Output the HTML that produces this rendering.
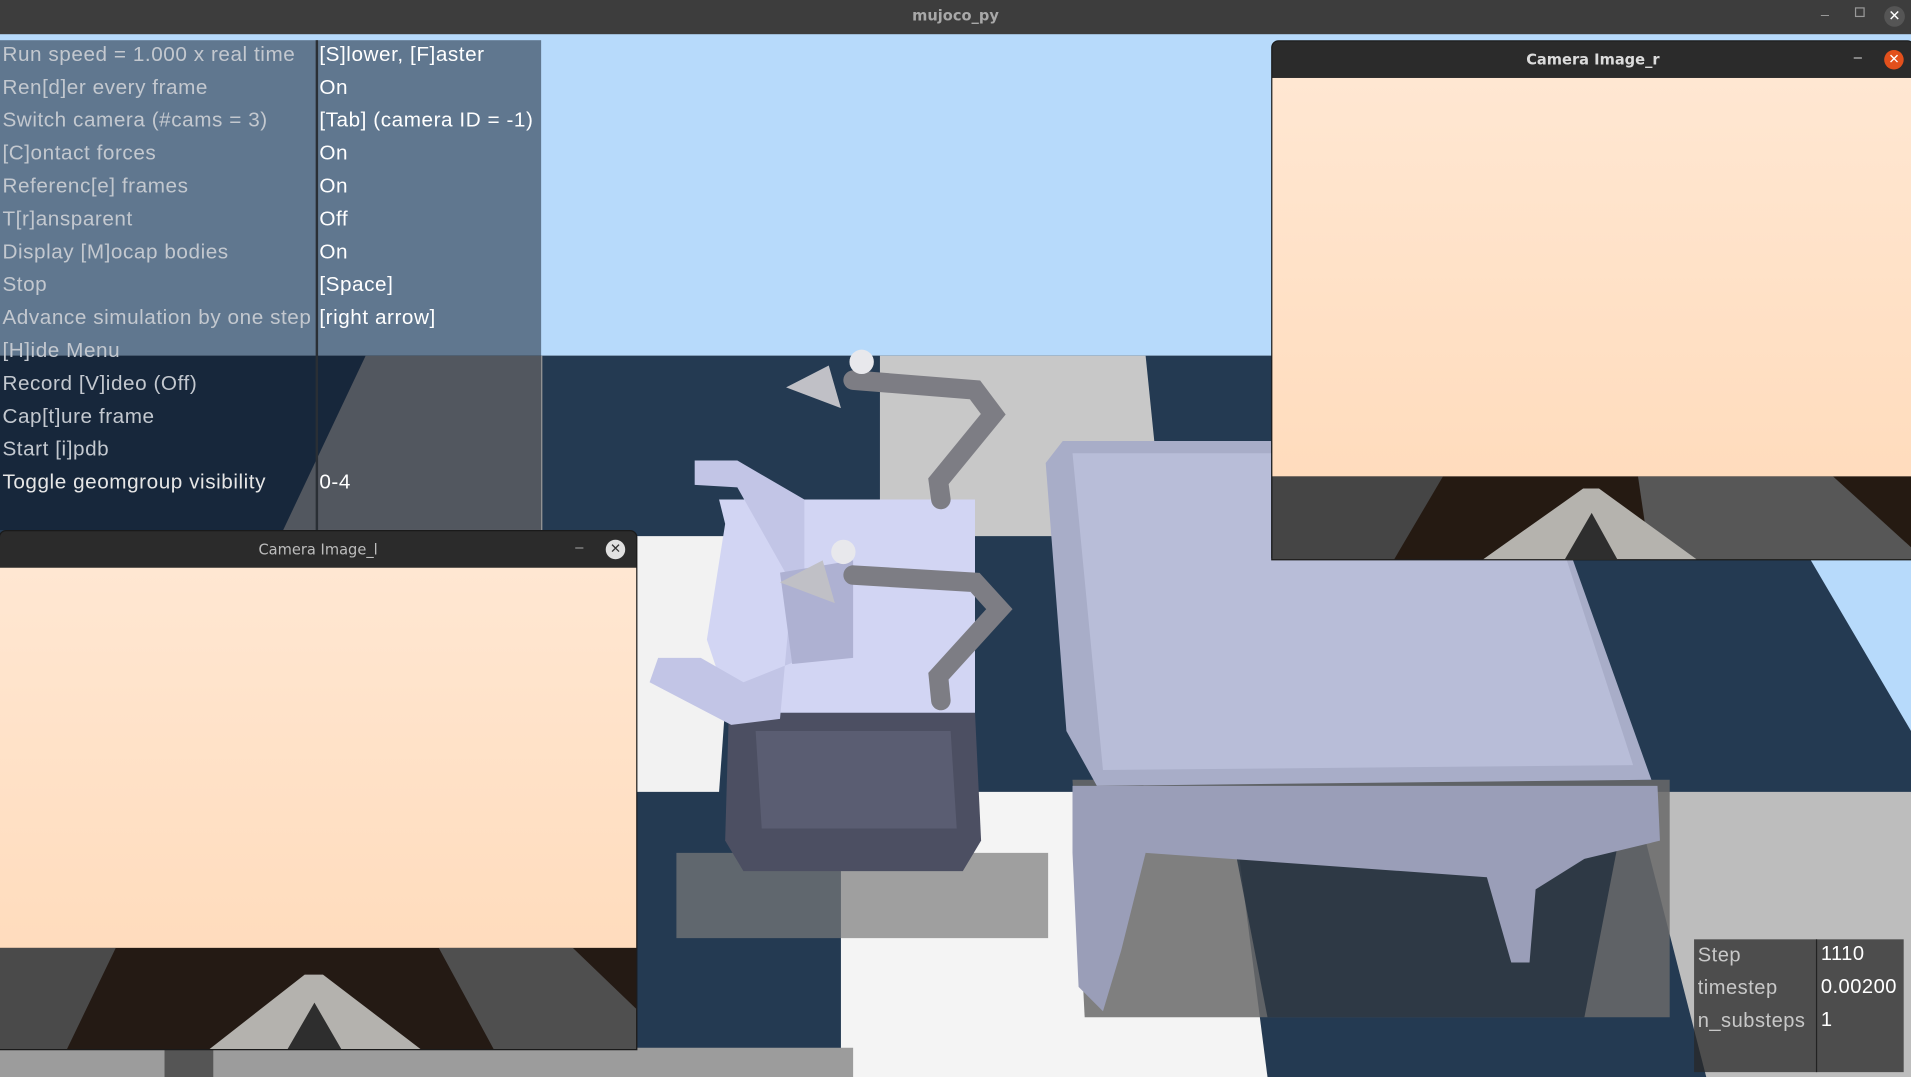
<!DOCTYPE html>
<html><head><meta charset="utf-8"><style>
html,body{margin:0;padding:0;width:1911px;height:1077px;overflow:hidden;background:#3c3c3c}
#s{position:absolute;left:0;top:0;width:1568px;height:884px;transform-origin:0 0;transform:scale(1.21875,1.21833);font-family:"Liberation Sans",sans-serif}
.abs{position:absolute}
.menu{left:0;top:33px;width:444px;height:402px;background:rgba(10,20,35,0.5)}
.row{position:absolute;left:2px;font-size:17px;letter-spacing:0.45px;color:#c3c8cf;line-height:20px;white-space:nowrap}
.val{position:absolute;left:262px;font-size:17px;letter-spacing:0.45px;color:#fff;line-height:20px;white-space:nowrap}
.win{background:#2b2b2b;border:1px solid #1a1a1a}
.wt{position:absolute;left:0;right:0;top:0;height:30px;line-height:30px;text-align:center;color:#dcdcdc;font-size:12px;font-weight:bold;font-family:"DejaVu Sans",sans-serif}
.peach{background:linear-gradient(#ffe7d2,#ffdcbd)}
</style></head><body><div id="s">
<svg class="abs" style="left:0;top:0" width="1568" height="884" viewBox="0 0 1568 884">
<rect x="0" y="28" width="1568" height="264" fill="#b7dafb"/>
<rect x="0" y="292" width="1568" height="592" fill="#243a52"/>
<polygon points="300,292 445,292 445,440 230,440" fill="#9a9a9a"/>
<polygon points="722,292 940,292 955,440 722,440" fill="#c8c8c8"/>
<polygon points="500,440 605,440 590,650 521,650" fill="#f2f2f2"/>
<polygon points="1480,450 1568,450 1568,600" fill="#b7dafb"/>
<polygon points="690,650 1010,650 1040,884 690,884" fill="#f4f4f4"/>
<polygon points="1340,650 1568,650 1568,884 1400,884" fill="#bdbdbd"/>
<polygon points="0,860 700,860 700,884 0,884" fill="#9c9c9c"/>
<polygon points="135,860 175,860 175,884 135,884" fill="#555"/>
<polygon points="880,640 1370,640 1370,835 890,835" fill="#6a6a6a" opacity="0.85"/>
<polygon points="1010,680 1330,680 1300,835 1040,835" fill="#1a2838" opacity="0.7"/>
<polygon points="555,700 860,700 860,770 555,770" fill="#7a7a7a" opacity="0.7"/>
<polygon points="598,585 800,585 805,690 790,715 610,715 595,690" fill="#4c4f62"/>
<polygon points="620,600 780,600 785,680 625,680" fill="#5a5d72"/>
<polygon points="590,410 800,410 800,585 600,585 580,525 595,430" fill="#d2d5f3"/>
<polygon points="570,378 605,378 660,410 660,540 610,560 575,540 540,540 533,560 600,595 640,590 650,480 605,400 570,398" fill="#c2c5e6"/>
<polygon points="640,470 700,460 700,540 650,545" fill="#aeb1d2"/>
<g fill="none" stroke="#7d7d84" stroke-width="16" stroke-linecap="round">
<path d="M700 312 L800 320 L815 340 L770 395 L772 410"/>
<path d="M700 472 L800 478 L820 500 L770 555 L772 575"/>
</g>
<g fill="#c0c0c6"><polygon points="645,318 680,300 690,335"/><polygon points="640,478 675,460 685,495"/>
<circle cx="707" cy="297" r="10" fill="#e8e8ec"/><circle cx="692" cy="453" r="10" fill="#e8e8ec"/></g>
<polygon points="872,362 1043,362 1043,458 1290,458 1355,640 900,645 875,600 858,380" fill="#a8adc8"/>
<polygon points="880,372 1043,372 1043,458 1285,458 1340,628 905,632" fill="#b8bdd8"/>
<polygon points="880,645 1360,645 1362,690 1300,705 1260,730 1255,790 1240,790 1220,720 940,700 920,780 905,830 885,810 880,700" fill="#9a9eb8"/>
</svg>
<div class="abs" style="left:0;top:0;width:1568px;height:28px;background:#3d3d3d"></div>
<div class="abs" style="left:0;top:0;width:1568px;height:28px;line-height:27px;text-align:center;color:#a8a8a8;font-size:12px;font-weight:bold;font-family:'DejaVu Sans',sans-serif">mujoco_py</div>
<div class="abs" style="left:1494px;top:5px;color:#999;font-size:12px">–</div>
<div class="abs" style="left:1522px;top:6px;width:6px;height:6px;border:1px solid #999"></div>
<div class="abs" style="left:1546px;top:5px;width:17px;height:17px;border-radius:50%;background:#555;color:#fff;font-size:12px;line-height:17px;text-align:center">✕</div>

<div class="abs menu"></div>
<div class="abs" style="left:259px;top:33px;width:2px;height:402px;background:#2a2f35"></div>
<div class="abs" style="left:0;top:34px">
<div class="row" style="top:1px">Run speed = 1.000 x real time</div><div class="val" style="top:1px">[S]lower, [F]aster</div>
<div class="row" style="top:28px">Ren[d]er every frame</div><div class="val" style="top:28px">On</div>
<div class="row" style="top:55px">Switch camera (#cams = 3)</div><div class="val" style="top:55px">[Tab] (camera ID = -1)</div>
<div class="row" style="top:82px">[C]ontact forces</div><div class="val" style="top:82px">On</div>
<div class="row" style="top:109px">Referenc[e] frames</div><div class="val" style="top:109px">On</div>
<div class="row" style="top:136px">T[r]ansparent</div><div class="val" style="top:136px">Off</div>
<div class="row" style="top:163px">Display [M]ocap bodies</div><div class="val" style="top:163px">On</div>
<div class="row" style="top:190px">Stop</div><div class="val" style="top:190px">[Space]</div>
<div class="row" style="top:217px">Advance simulation by one step</div><div class="val" style="top:217px">[right arrow]</div>
<div class="row" style="top:244px">[H]ide Menu</div>
<div class="row" style="top:271px">Record [V]ideo (Off)</div>
<div class="row" style="top:298px">Cap[t]ure frame</div>
<div class="row" style="top:325px">Start [i]pdb</div>
<div class="row" style="top:352px;color:#e6e6e6">Toggle geomgroup visibility</div><div class="val" style="top:352px">0-4</div>
</div>

<div class="abs win" style="left:-1px;top:435px;width:522px;height:425px;border-radius:6px 6px 0 0">
<div class="wt" style="color:#bdbdbd;font-weight:normal">Camera Image_l</div>
<div class="abs" style="left:472px;top:6px;color:#aaa;font-size:12px">–</div>
<div class="abs" style="left:497px;top:7px;width:16px;height:16px;border-radius:50%;background:#e0e0e0;color:#333;font-size:11px;line-height:16px;text-align:center">✕</div>
<div class="abs peach" style="left:0;top:30px;width:522px;height:312px"></div>
<svg class="abs" style="left:0;top:342px" width="522" height="83" viewBox="0 0 522 83">
<rect width="522" height="83" fill="#241a14"/>
<polygon points="0,0 95,0 55,83 0,83" fill="#4a4a4a"/>
<polygon points="360,0 470,0 522,50 522,83 405,83" fill="#4f4f4f"/>
<polygon points="250,22 265,22 345,83 172,83" fill="#b4b2ae"/>
<polygon points="258,45 280,83 236,83" fill="#2e2e2e"/>
</svg>
</div>

<div class="abs win" style="left:1043px;top:33px;width:526px;height:425px;border-radius:6px 6px 0 0">
<div class="wt">Camera Image_r</div>
<div class="abs" style="left:477px;top:6px;color:#ddd;font-size:12px">–</div>
<div class="abs" style="left:502px;top:7px;width:16px;height:16px;border-radius:50%;background:#e2501c;color:#fff;font-size:11px;line-height:16px;text-align:center">✕</div>
<div class="abs peach" style="left:0;top:30px;width:526px;height:327px"></div>
<svg class="abs" style="left:0;top:357px" width="526" height="68" viewBox="0 0 526 68">
<rect width="526" height="68" fill="#251a12"/>
<polygon points="0,0 140,0 100,68 0,68" fill="#454545"/>
<polygon points="300,0 460,0 526,60 526,68 310,68" fill="#575757"/>
<polygon points="255,10 268,10 348,68 173,68" fill="#b5b3ae"/>
<polygon points="262,30 283,68 240,68" fill="#2e2e2e"/>
</svg>
</div>

<div class="abs" style="left:1390px;top:771px;width:172px;height:109px;background:rgba(40,40,40,0.75)"></div>
<div class="abs" style="left:1490px;top:771px;width:1px;height:109px;background:#222"></div>
<div class="abs" style="left:1393px;top:771px;font-size:16.5px;letter-spacing:0.4px;line-height:27px;color:#c8c8c8">Step<br>timestep<br>n_substeps</div>
<div class="abs" style="left:1494px;top:770px;font-size:16.5px;letter-spacing:0.4px;line-height:27px;color:#fff">1110<br>0.00200<br>1</div>
</div></body></html>
